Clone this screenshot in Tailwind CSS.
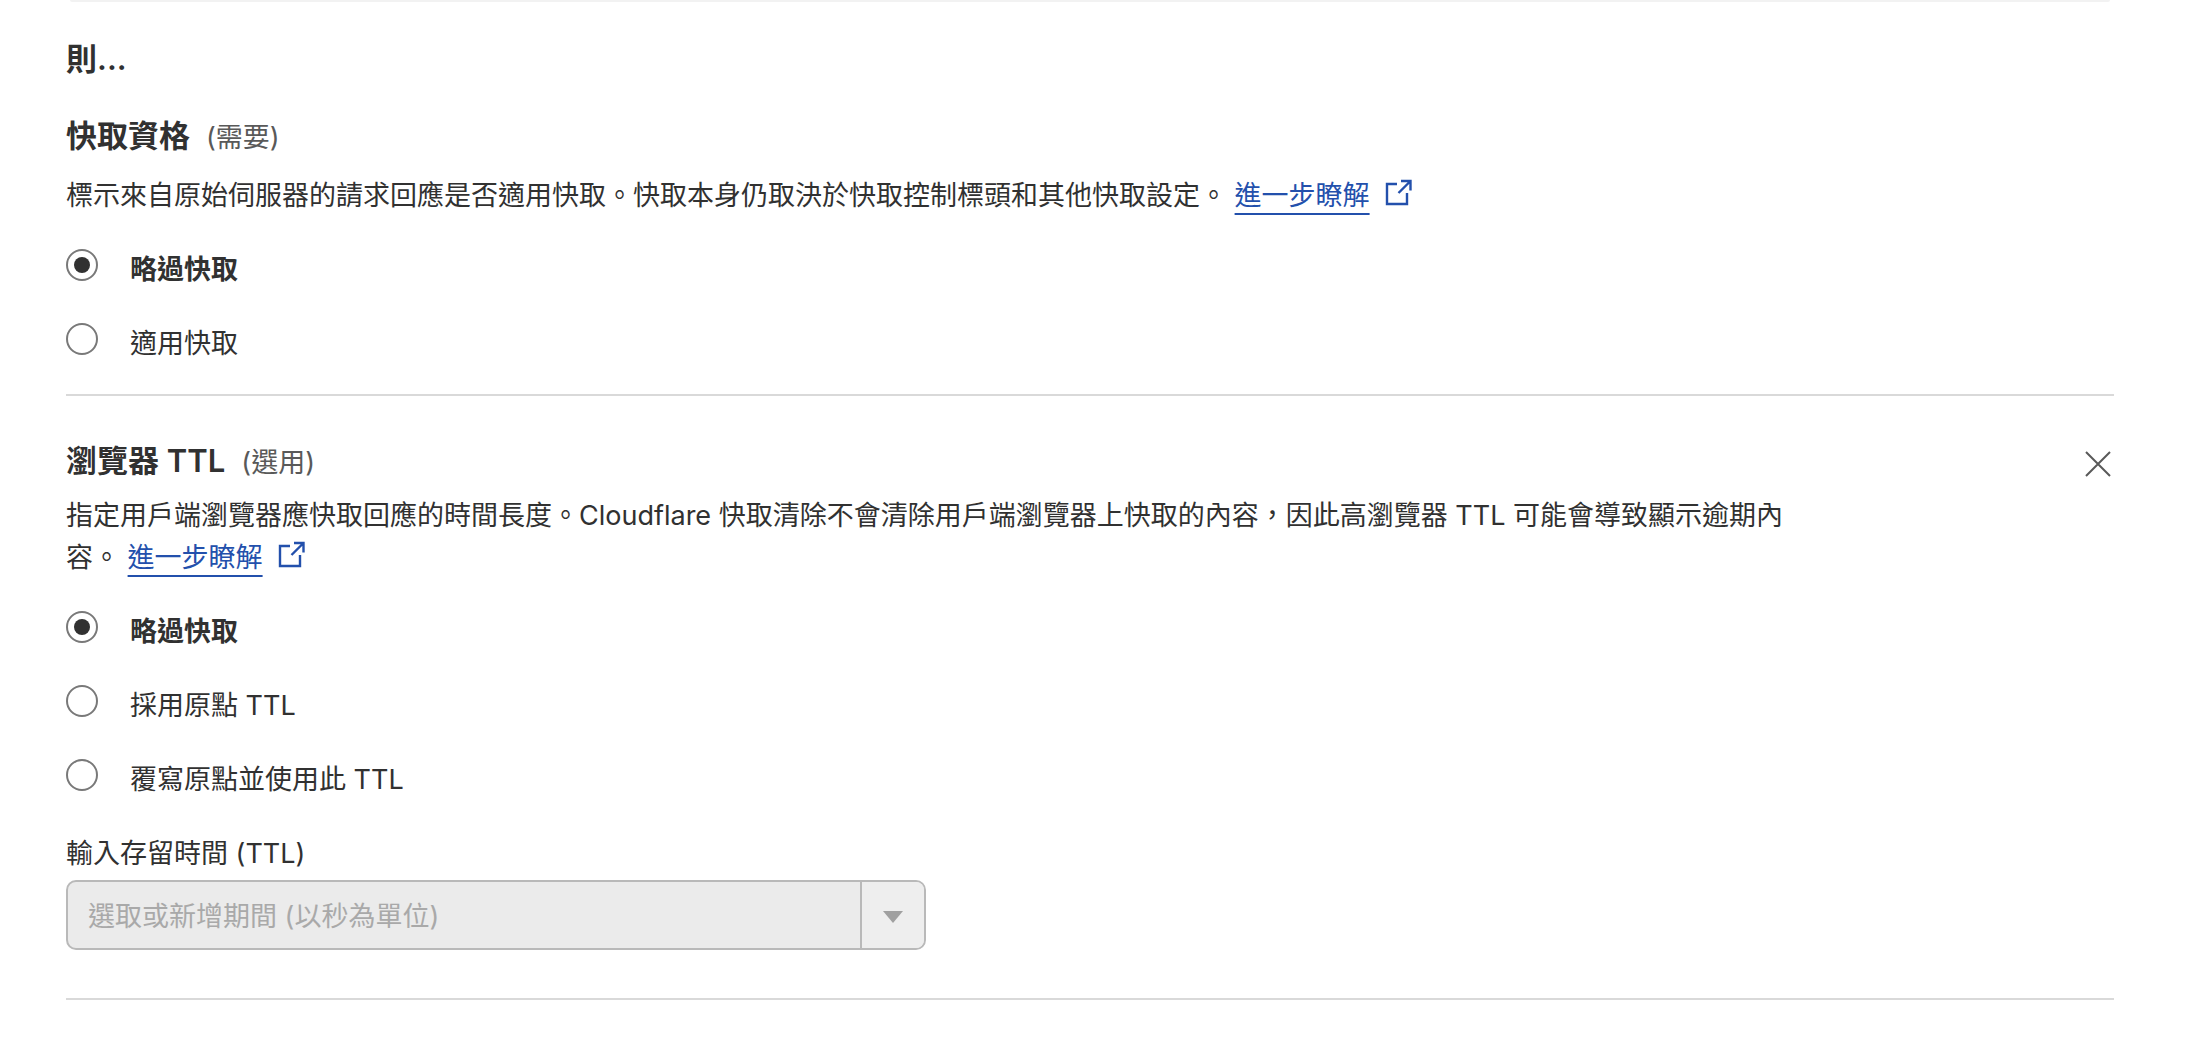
<!DOCTYPE html>
<html lang="zh-Hant">
<head>
<meta charset="utf-8">
<meta name="viewport" content="width=device-width, initial-scale=1">
<title>快取規則</title>
<script src="https://cdn.jsdelivr.net/npm/@tailwindcss/browser@4"></script>
</head>
<body class="bg-white font-[Inter,'Noto_Sans_CJK_TC',sans-serif] text-[27px] leading-[42px] text-[#313131]">
<main class="pl-[66px] pr-[94px]">
  <div class="mx-1 h-0.5 rounded-b-lg bg-[#f2f2f2]"></div>
  <h2 class="pt-9 text-[31px] font-semibold">則...</h2>

  <section class="border-b-2 border-[#d9d9d9] pt-[35px] pb-[31px]">
    <h3 class="flex h-[42px] items-baseline gap-4 text-[31px] font-semibold">快取資格 <span class="text-[27px] leading-none font-normal text-[#595959]">(需要)</span></h3>
    <p class="pt-[18px]">標示來自原始伺服器的請求回應是否適用快取。快取本身仍取決於快取控制標頭和其他快取設定。 <a href="#" class="text-[#2350ac]"><span class="underline decoration-2 underline-offset-8">進一步瞭解</span><svg class="ml-[14px] inline size-7 align-[-1px]" viewBox="0 0 28 28" fill="none" stroke="currentColor" stroke-width="2.4" aria-hidden="true"><path d="M13 6H3v20h20V15M17 3h9.500v9.500M26 3.500 14.500 15"/></svg></a></p>
    <div class="flex flex-col gap-[34px] pt-8">
      <label class="flex h-10 items-start gap-8 font-bold"><input type="radio" name="cache" checked class="size-8 shrink-0 appearance-none rounded-full border-2 border-[#797979] bg-clip-content p-1.5 checked:bg-[#313131]">略過快取</label>
      <label class="flex h-10 items-start gap-8"><input type="radio" name="cache" class="size-8 shrink-0 appearance-none rounded-full border-2 border-[#797979] bg-clip-content p-1.5 checked:bg-[#313131]">適用快取</label>
    </div>
  </section>

  <section class="border-b-2 border-[#d9d9d9] pt-11 pb-12">
    <div class="flex h-[42px] items-center justify-between">
      <h3 class="flex h-[42px] items-baseline gap-4 text-[31px] font-semibold">瀏覽器 TTL <span class="text-[27px] leading-none font-normal text-[#595959]">(選用)</span></h3>
      <button type="button" aria-label="移除" class="mt-1.5 text-[#595959]"><svg class="block size-8" viewBox="0 0 32 32" fill="none" stroke="currentColor" stroke-width="2" aria-hidden="true"><path d="m4 4 24 24M28 4 4 28"/></svg></button>
    </div>
    <p class="max-w-[1730px] pt-[13px]">指定用戶端瀏覽器應快取回應的時間長度。Cloudflare 快取清除不會清除用戶端瀏覽器上快取的內容，因此高瀏覽器 TTL 可能會導致顯示逾期內容。 <a href="#" class="text-[#2350ac]"><span class="underline decoration-2 underline-offset-8">進一步瞭解</span><svg class="ml-[14px] inline size-7 align-[-1px]" viewBox="0 0 28 28" fill="none" stroke="currentColor" stroke-width="2.4" aria-hidden="true"><path d="M13 6H3v20h20V15M17 3h9.500v9.500M26 3.500 14.500 15"/></svg></a></p>
    <div class="flex flex-col gap-[34px] pt-8">
      <label class="flex h-10 items-start gap-8 font-bold"><input type="radio" name="ttl" checked class="size-8 shrink-0 appearance-none rounded-full border-2 border-[#797979] bg-clip-content p-1.5 checked:bg-[#313131]">略過快取</label>
      <label class="flex h-10 items-start gap-8"><input type="radio" name="ttl" class="size-8 shrink-0 appearance-none rounded-full border-2 border-[#797979] bg-clip-content p-1.5 checked:bg-[#313131]">採用原點 TTL</label>
      <label class="flex h-10 items-start gap-8"><input type="radio" name="ttl" class="size-8 shrink-0 appearance-none rounded-full border-2 border-[#797979] bg-clip-content p-1.5 checked:bg-[#313131]">覆寫原點並使用此 TTL</label>
    </div>
    <label for="duration" class="mt-[34px] block">輸入存留時間 (TTL)</label>
    <div class="mt-[5px] flex h-[70px] w-full max-w-[860px] overflow-hidden rounded-[10px] border-2 border-[#b9b9b9] bg-[#ebebeb]">
      <input id="duration" type="text" disabled placeholder="選取或新增期間 (以秒為單位)" class="min-w-0 flex-1 px-5 pt-1 placeholder:text-[#a9a9a9]">
      <button type="button" disabled aria-label="開啟選單" class="flex w-16 items-center justify-center border-l-2 border-[#b9b9b9] bg-[#eeeeee] pt-1 text-[#a0a0a0]"><svg class="h-3 w-5" viewBox="0 0 20 12" fill="currentColor" aria-hidden="true"><path d="M0 0h20L10 12z"/></svg></button>
    </div>
  </section>
</main>
</body>
</html>
